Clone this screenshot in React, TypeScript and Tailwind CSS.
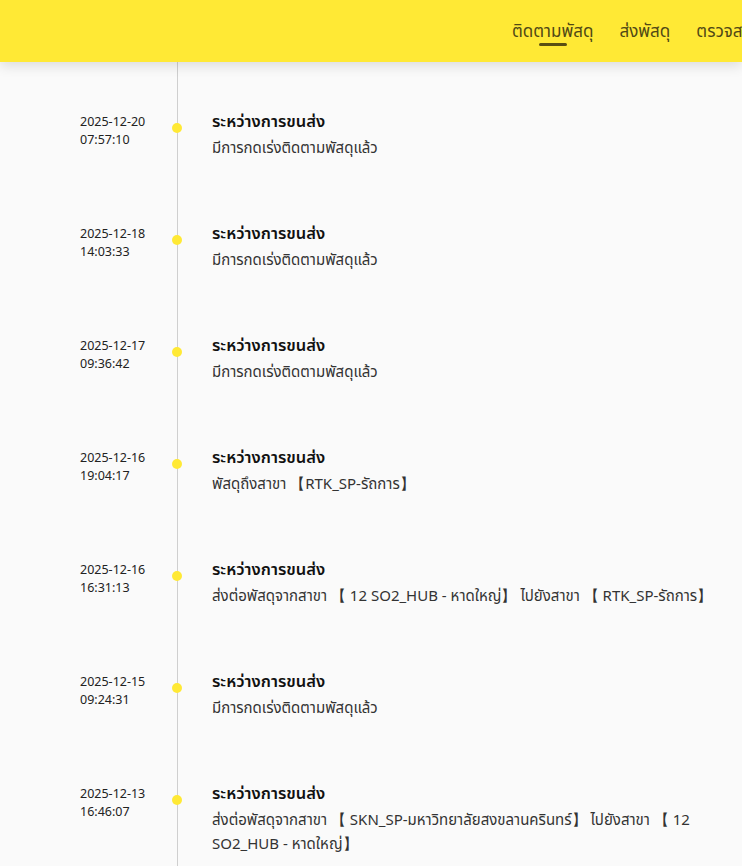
import React from "react";

const items = [
  { d: "2025-12-20", t: "07:57:10", desc: "มีการกดเร่งติดตามพัสดุแล้ว" },
  { d: "2025-12-18", t: "14:03:33", desc: "มีการกดเร่งติดตามพัสดุแล้ว" },
  { d: "2025-12-17", t: "09:36:42", desc: "มีการกดเร่งติดตามพัสดุแล้ว" },
  { d: "2025-12-16", t: "19:04:17", desc: "พัสดุถึงสาขา 【RTK_SP-รัถการ】" },
  { d: "2025-12-16", t: "16:31:13", desc: "ส่งต่อพัสดุจากสาขา 【 12 SO2_HUB - หาดใหญ่】 ไปยังสาขา 【 RTK_SP-รัถการ】" },
  { d: "2025-12-15", t: "09:24:31", desc: "มีการกดเร่งติดตามพัสดุแล้ว" },
  { d: "2025-12-13", t: "16:46:07", desc: "ส่งต่อพัสดุจากสาขา 【 SKN_SP-มหาวิทยาลัยสงขลานครินทร์】 ไปยังสาขา 【 12 SO2_HUB - หาดใหญ่】" },
];

export default function App() {
  return (
    <div
      className="w-[742px] h-[866px] overflow-hidden bg-[#fafafa] relative"
      style={{ fontFamily: '"Noto Sans", "Noto Sans Thai", sans-serif' }}
    >
      <header className="relative z-10 h-[62px] bg-[#ffe935] shadow-[0_4px_12px_rgba(0,0,0,0.12)] flex items-center overflow-hidden pl-[512px]">
        <nav className="flex items-center gap-[26px] text-[17px] text-[#504815] whitespace-nowrap">
          <div className="relative h-[62px] flex items-center">
            <span>ติดตามพัสดุ</span>
            <span className="absolute left-1/2 -translate-x-1/2 bottom-[16px] w-[28px] h-[3px] bg-[#5a4f12] rounded"></span>
          </div>
          <div className="h-[62px] flex items-center">ส่งพัสดุ</div>
          <div className="h-[62px] flex items-center">ตรวจสอบราคา</div>
        </nav>
      </header>
      <div className="relative pl-[80px] pr-[16px]">
        <div className="absolute left-[177px] top-0 bottom-0 w-px bg-[#cfcfcf]"></div>
        <div className="flex flex-col pt-[48px]">
          {items.map((it, i) => (
            <div key={i} className="flex min-h-[112px]">
              <div className="w-[97px] text-[12.5px] leading-[18px] text-[#222] pt-[3px]">
                <div>{it.d}</div>
                <div>{it.t}</div>
              </div>
              <div className="relative w-[35px]">
                <span className="absolute left-0 top-[13px] -translate-x-1/2 w-[10px] h-[10px] rounded-full bg-[#ffe935]"></span>
              </div>
              <div className="flex-1">
                <div className="text-[16.5px] font-semibold leading-[22px] text-[#111]">ระหว่างการขนส่ง</div>
                <div className="text-[15px] leading-[24px] text-[#333] mt-[3px]">{it.desc}</div>
              </div>
            </div>
          ))}
        </div>
      </div>
    </div>
  );
}
